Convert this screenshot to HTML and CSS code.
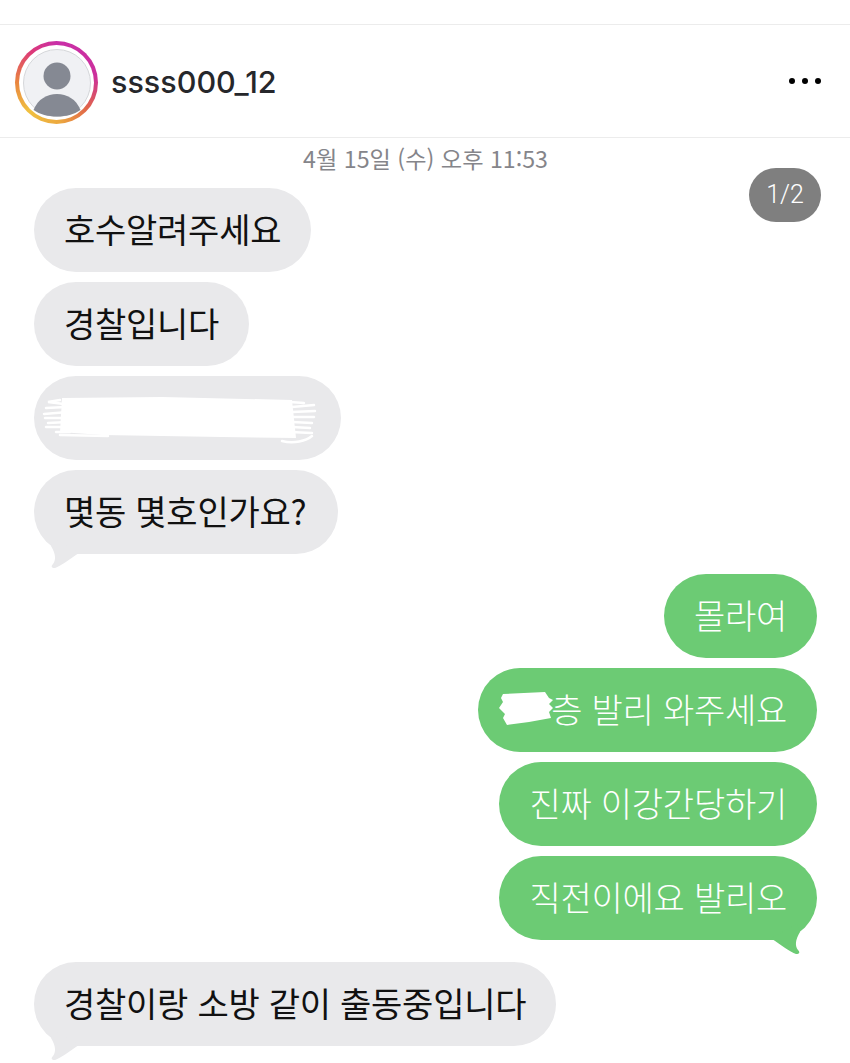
FILE: index.html
```html
<!DOCTYPE html>
<html lang="ko">
<head>
  <meta charset="utf-8">
  <title>ssss000_12</title>
  <link rel="stylesheet" href="styles.css">
</head>
<body>
  <div class="page">
    <header class="topbar">
      <div class="avatar-ring">
        <div class="avatar-inner">
          <svg class="avatar-icon" viewBox="0 0 68 68" aria-hidden="true">
            <circle cx="34" cy="34" r="33.5" fill="#f0f1f4" stroke="#d5d7da" stroke-width="1"/>
            <circle cx="34" cy="27" r="13.5" fill="#858993"/>
            <path d="M10.5 61 C15 50 24 45 34 45 C44 45 53 50 57.5 61 C51 65.5 43 67.5 34 67.5 C25 67.5 17 65.5 10.5 61 Z" fill="#858993"/>
          </svg>
        </div>
      </div>
      <div class="username">ssss000_12</div>
      <div class="more"><span></span><span></span><span></span></div>
    </header>

    <main class="chat">
      <div class="date">4월 15일 (수) 오후 11:53</div>
      <div class="counter">1/2</div>

      <div class="bubble them">호수알려주세요</div>
      <div class="bubble them">경찰입니다</div>
      <div class="bubble them redacted-row">
        <svg class="scribble" viewBox="0 0 276 54" aria-hidden="true">
          <path d="M20 4 L120 3 L250 6 L254 44 L180 43 L60 41 L18 38 Z" fill="#fff"/>
          <g stroke="#fff" stroke-width="2.5" fill="none" stroke-linecap="round">
            <path d="M18 6 L6 8 L22 10 M4 14 L24 13 M2 20 L26 18 M3 24 L24 24 M6 29 L26 28 M4 33 L28 33 M14 38 L28 38 M18 41 L66 42"/>
            <path d="M248 8 L262 9 M250 13 L272 11 M250 18 L273 17 M250 23 L272 23 M250 28 L270 29 M250 33 L268 34 M248 38 L270 39 M240 47 C252 50 264 47 270 42"/>
          </g>
        </svg>
      </div>
      <div class="bubble them tail-left question">몇동 몇호인가요?</div>

      <div class="bubble me first-me">몰라여</div>
      <div class="bubble me">
        <svg class="scribble-small" viewBox="0 0 56 34" aria-hidden="true">
          <path d="M4 2 L46 0 L50 6 L54 8 L50 12 L54 16 L50 20 L52 26 L30 30 L8 33 L4 26 L6 22 L0 16 L4 10 L2 6 Z" fill="#fff"/>
        </svg>층 발리 와주세요</div>
      <div class="bubble me">진짜 이강간당하기</div>
      <div class="bubble me tail-right">직전이에요 발리오</div>

      <div class="bubble them tail-left last-them">경찰이랑 소방 같이 출동중입니다</div>
    </main>
  </div>
</body>
</html>
```

FILE: styles.css
```css
* {
  box-sizing: border-box;
}
html, body {
  margin: 0;
  padding: 0;
  background: #fff;
}
body {
  font-family: "Noto Sans CJK KR", "Liberation Sans", sans-serif;
}
.page {
  width: 850px;
  height: 1063px;
  overflow: hidden;
  padding-top: 24px;
}
.topbar {
  height: 114px;
  border-top: 1px solid #ececec;
  border-bottom: 1px solid #ececec;
  display: flex;
  align-items: center;
  padding: 0 29px 0 15px;
}
.avatar-ring {
  width: 83px;
  height: 83px;
  margin-top: 3px;
  border-radius: 50%;
  padding: 4px;
  background: conic-gradient(#c92fa8, #cc2f9c 80deg, #e0654a 130deg, #eca83f 175deg, #f0c040 225deg, #e9863f 270deg, #dd3a78 320deg, #c92fa8);
}
.avatar-inner {
  width: 75px;
  height: 75px;
  border-radius: 50%;
  background: #fff;
  padding: 3.5px;
}
.avatar-icon {
  display: block;
  width: 68px;
  height: 68px;
}
.username {
  margin-left: 13px;
  font-family: Inter, "Liberation Sans", sans-serif;
  font-size: 30.5px;
  font-weight: 500;
  color: #26272b;
}
.more {
  margin-left: auto;
  display: flex;
  gap: 6.5px;
}
.more span {
  width: 6.5px;
  height: 6.5px;
  border-radius: 50%;
  background: #000;
}
.chat {
  position: relative;
  display: flex;
  flex-direction: column;
  padding: 0 33px 0 34px;
}
.date {
  height: 50px;
  padding-top: 3px;
  text-align: center;
  font-size: 23.2px;
  line-height: 34px;
  color: #85858a;
}
.counter {
  position: absolute;
  top: 30px;
  right: 29px;
  width: 72px;
  height: 54px;
  border-radius: 27px;
  background: #7f7f7f;
  color: #fff;
  font-family: Roboto, "Liberation Sans", sans-serif;
  font-size: 25px;
  font-weight: 300;
  line-height: 54px;
  text-align: center;
}
.bubble {
  position: relative;
  height: 84px;
  border-radius: 42px;
  padding: 0 30px;
  margin-bottom: 10px;
  font-size: 34px;
  letter-spacing: -0.25px;
  line-height: 82px;
  white-space: nowrap;
}
.them {
  align-self: flex-start;
  background: #e9e9eb;
  color: #111;
}
.me {
  align-self: flex-end;
  background: #6ccb74;
  color: #fff;
  font-weight: 300;
}
.redacted-row {
  width: 307px;
}
.question {
  padding-right: 32px;
}
.scribble {
  position: absolute;
  left: 8px;
  top: 18px;
  width: 276px;
  height: 54px;
}
.scribble-small {
  width: 56px;
  height: 34px;
  vertical-align: -3px;
  margin-right: -4px;
  margin-left: -9px;
}
.tail-left::after {
  content: "";
  position: absolute;
  left: 17px;
  bottom: -14px;
  width: 30px;
  height: 30px;
  background: #e9e9eb;
  clip-path: path("M3 0 L30 15 L28 15 C20 20 10 28 4 30 C0 30 0 28 2 26 C5 22 5 16 0 8 Z");
}
.tail-right::after {
  content: "";
  position: absolute;
  right: 17px;
  bottom: -14px;
  width: 30px;
  height: 30px;
  background: #6ccb74;
  clip-path: path("M27 0 L0 15 L2 15 C10 20 20 28 26 30 C30 30 30 28 28 26 C25 22 25 16 30 8 Z");
}
.first-me {
  margin-top: 10px;
}
.last-them {
  margin-top: 12px;
}
```
